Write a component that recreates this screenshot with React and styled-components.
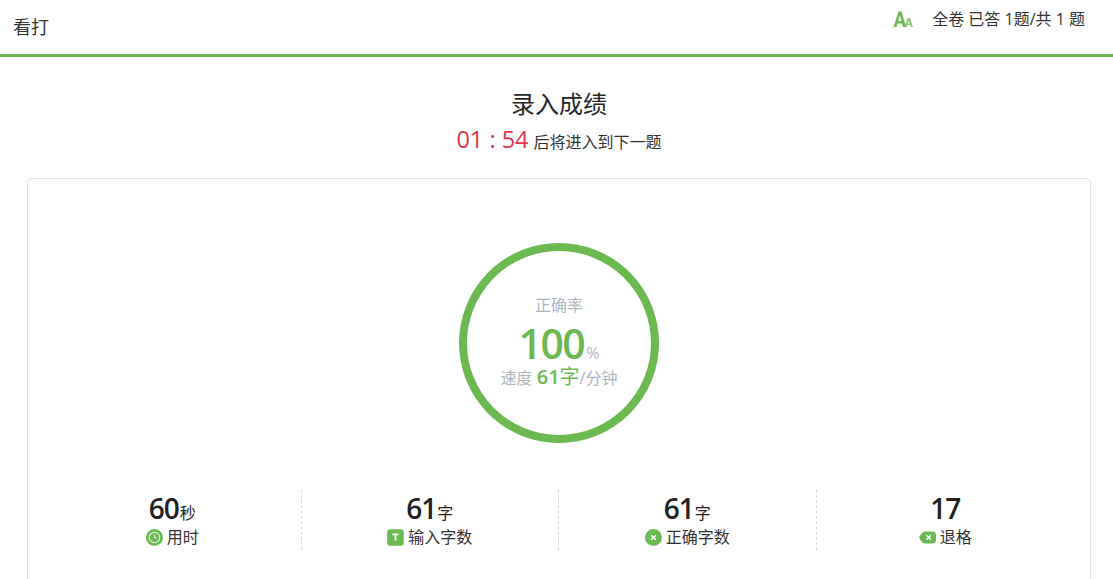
import React from "react";
import styled, { createGlobalStyle } from "styled-components";

const green = "#6cb952";

const GlobalStyle = createGlobalStyle`
  html, body {
    margin: 0;
    padding: 0;
    background: #fff;
    color: #222;
    font-family: "Open Sans", "Noto Sans CJK SC", sans-serif;
    overflow: hidden;
  }
`;

const Page = styled.div`
  width: 1113px;
  height: 579px;
  overflow: hidden;
`;

const Header = styled.header`
  display: flex;
  justify-content: space-between;
  height: 54px;
  border-bottom: 3px solid ${green};
`;

const Brand = styled.div`
  padding: 15px 0 0 13px;
  font-size: 18px;
  line-height: 24px;
  color: #333;
`;

const Progress = styled.div`
  display: flex;
  align-items: flex-start;
  gap: 19px;
  padding: 8px 28px 0 0;
  font-size: 16px;
  line-height: 22px;
  color: #333;
`;

const FontIcon = styled.svg`
  width: 20px;
  height: 18px;
  margin-top: 2px;
`;

const Result = styled.section`
  padding-left: 5px;
  text-align: center;
`;

const Title = styled.h1`
  margin: 0;
  padding-top: 31px;
  font-size: 24px;
  font-weight: 400;
  line-height: 32px;
  color: #262626;
`;

const Countdown = styled.div`
  display: flex;
  justify-content: center;
  align-items: baseline;
  gap: 5px;
  margin-top: 3px;
  height: 32px;
  font-size: 16px;
  line-height: 32px;
  color: #333;
`;

const Time = styled.span`
  font-size: 23.5px;
  font-weight: 500;
  color: #dc3545;
`;

const Card = styled.div`
  box-sizing: border-box;
  width: 1064px;
  height: 420px;
  margin: 23px 0 0 27px;
  padding: 64px 16px 0;
  border: 1px solid #e0e0e0;
  border-radius: 5px;
`;

const Ring = styled.div`
  box-sizing: border-box;
  display: flex;
  flex-direction: column;
  align-items: center;
  width: 200px;
  height: 200px;
  margin: 0 auto;
  padding-top: 43px;
  border: 8px solid ${green};
  border-radius: 50%;
`;

const RingLabel = styled.div`
  font-size: 16px;
  line-height: 22px;
  color: #adb5bd;
`;

const Percent = styled.div`
  margin-top: 5px;
  height: 44px;
  font-size: 41px;
  font-weight: 600;
  letter-spacing: -1.5px;
  line-height: 44px;
  color: ${green};
`;

const PercentUnit = styled.span`
  margin-left: 2px;
  font-size: 16px;
  font-weight: 400;
  letter-spacing: 0;
  color: #adb5bd;
`;

const Speed = styled.div`
  margin-top: -1px;
  font-size: 16px;
  line-height: 26px;
  color: #adb5bd;
`;

const SpeedValue = styled.span`
  font-size: 20px;
  font-weight: 600;
  color: ${green};
`;

const SpeedUnit = styled.span`
  font-size: 20px;
  color: ${green};
`;

const Stats = styled.div`
  display: grid;
  grid-template-columns: repeat(4, 1fr);
  margin-top: 47px;
`;

const Stat = styled.div`
  height: 60px;
  text-align: center;
  border-right: ${(p) => (p.$last ? "none" : "1px dashed #d8d8d8")};
`;

const StatValue = styled.div`
  height: 36px;
  font-size: 28px;
  font-weight: 600;
  letter-spacing: -1px;
  line-height: 36px;
  color: #222;
`;

const StatUnit = styled.span`
  margin-left: 1px;
  font-size: 16px;
  font-weight: 400;
  letter-spacing: 0;
`;

const StatLabel = styled.div`
  display: flex;
  justify-content: center;
  align-items: center;
  gap: 4px;
  height: 22px;
  font-size: 16px;
  line-height: 22px;
  color: #333;
`;

const StatIcon = styled.svg`
  flex: none;
  width: 17px;
  height: 17px;
`;

const ClockIcon = () => (
  <StatIcon viewBox="0 0 17 17">
    <circle cx="8.5" cy="8.5" r="8.5" fill={green} />
    <circle cx="8.5" cy="8.5" r="5.2" fill="none" stroke="#dff0d8" strokeWidth="1.2" />
    <path d="M8.5 5.6v3.2h2.4" fill="none" stroke="#dff0d8" strokeWidth="1.1" />
  </StatIcon>
);

const TextIcon = () => (
  <StatIcon viewBox="0 0 17 17">
    <rect width="16.5" height="16.5" x="0.2" y="0.2" rx="3" fill={green} />
    <path d="M5.4 5.4h6.2M8.5 5.4v6.4" fill="none" stroke="#fff" strokeWidth="1.7" />
  </StatIcon>
);

const CrossIcon = () => (
  <StatIcon viewBox="0 0 17 17">
    <circle cx="8.5" cy="8.5" r="8.5" fill={green} />
    <path d="M6.2 6.2l4.6 4.6M10.8 6.2l-4.6 4.6" fill="none" stroke="#fff" strokeWidth="1.5" />
  </StatIcon>
);

const BackspaceIcon = () => (
  <StatIcon viewBox="0 0 17 17">
    <path d="M6 2.5h7.5a3.5 3.5 0 0 1 3.5 3.5v5a3.5 3.5 0 0 1-3.5 3.5H6C3.5 14.5 1.5 11 0 8.5 1.5 6 3.5 2.5 6 2.5z" fill={green} />
    <path d="M7.4 6.3l4.4 4.4M11.8 6.3l-4.4 4.4" fill="none" stroke="#fff" strokeWidth="1.5" />
  </StatIcon>
);

const stats = [
  { value: 60, unit: "秒", label: "用时", Icon: ClockIcon },
  { value: 61, unit: "字", label: "输入字数", Icon: TextIcon },
  { value: 61, unit: "字", label: "正确字数", Icon: CrossIcon },
  { value: 17, unit: "", label: "退格", Icon: BackspaceIcon },
];

export default function App() {
  return (
    <Page>
      <GlobalStyle />
      <Header>
        <Brand>看打</Brand>
        <Progress>
          <FontIcon viewBox="0 0 20 18">
            <path
              d="M0.5 17L5.5 1.5h3L13 17h-3l-1-3.6H4.6L3.5 17zM5.3 11h3L6.8 5.3z"
              fill={green}
            />
            <path
              d="M11.5 17l3.2-9h2.2l3 9h-2l-.6-2h-2.9l-.7 2zM14.7 13.4h1.9l-.9-3z"
              fill={green}
              opacity="0.8"
            />
          </FontIcon>
          <span>全卷 已答 1题/共 1 题</span>
        </Progress>
      </Header>
      <Result>
        <Title>录入成绩</Title>
        <Countdown>
          <Time>01 : 54</Time>
          <span>后将进入到下一题</span>
        </Countdown>
      </Result>
      <Card>
        <Ring>
          <RingLabel>正确率</RingLabel>
          <Percent>
            100<PercentUnit>%</PercentUnit>
          </Percent>
          <Speed>
            速度 <SpeedValue>61</SpeedValue>
            <SpeedUnit>字</SpeedUnit>/分钟
          </Speed>
        </Ring>
        <Stats>
          {stats.map(({ value, unit, label, Icon }, i) => (
            <Stat key={label} $last={i === stats.length - 1}>
              <StatValue>
                {value}
                {unit && <StatUnit>{unit}</StatUnit>}
              </StatValue>
              <StatLabel>
                <Icon />
                {label}
              </StatLabel>
            </Stat>
          ))}
        </Stats>
      </Card>
    </Page>
  );
}
